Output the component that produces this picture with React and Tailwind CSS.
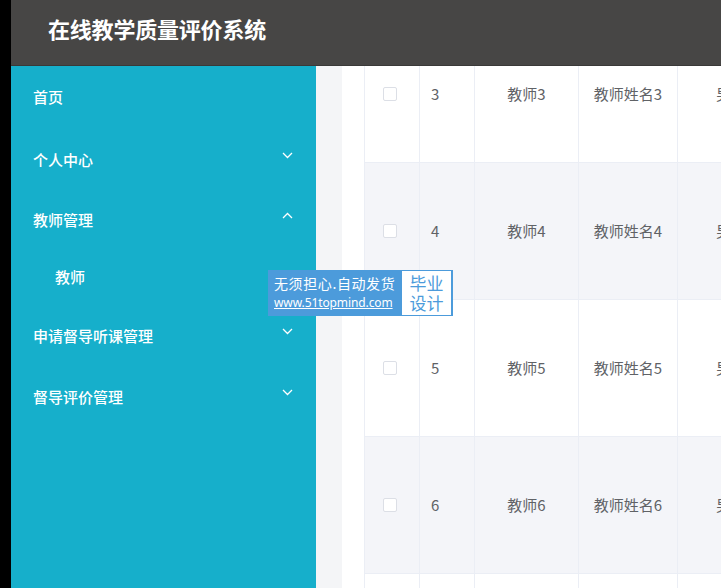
import React from "react";

const menus = [
  { label: "首页", h: "h-[60px]" },
  { label: "个人中心", arrow: "down", h: "h-[63px] pt-[3px]" },
  { label: "教师管理", arrow: "up", h: "h-[60px]" },
  { label: "教师", sub: true, h: "h-[54px]" },
  { label: "申请督导听课管理", arrow: "down", h: "h-[64px]" },
  { label: "督导评价管理", arrow: "down", h: "h-[58px]" },
];

const rows = [3, 4, 5, 6, 7];

function Chevron({ up }) {
  return (
    <svg width="11" height="7" viewBox="0 0 11 7" className="mb-[10px]">
      <path
        d={up ? "M1 6 L5.5 1.5 L10 6" : "M1 1 L5.5 5.5 L10 1"}
        fill="none"
        stroke="white"
        strokeWidth="1.3"
      />
    </svg>
  );
}

export default function App() {
  return (
    <div
      className="relative flex h-[588px] w-[721px] overflow-hidden bg-black"
      style={{ fontFamily: '"Microsoft YaHei", "Noto Sans CJK SC", sans-serif' }}
    >
      <div className="w-[11px] shrink-0 bg-black" />
      <div className="flex min-w-0 flex-1 flex-col">
        {/* header */}
        <div className="z-10 flex h-[66px] shrink-0 items-center border-b border-[#3a3938] bg-[#474645] pb-[9px] pl-[37px]">
          <h1 className="text-[22px] font-bold tracking-[-0.2px] text-white">在线教学质量评价系统</h1>
        </div>
        <div className="flex min-h-0 flex-1">
          {/* sidebar */}
          <div className="w-[305px] shrink-0 bg-[#16afcb] pt-[1px]">
            {menus.map((m) => (
              <div
                key={m.label}
                className={`flex items-center justify-between pr-[23px] text-[15px] font-medium text-white ${
                  m.sub ? "pl-[44px]" : "pl-[22px]"
                } ${m.h}`}
              >
                <span>{m.label}</span>
                {m.arrow && <Chevron up={m.arrow === "up"} />}
              </div>
            ))}
          </div>
          {/* main */}
          <div className="flex min-w-0 flex-1 bg-[#f4f5f7] pl-[26px]">
            <div className="min-w-0 flex-1 overflow-hidden bg-white pl-[22px]">
              <table className="-mt-[41px] w-[500px] table-fixed border-collapse text-[15px] text-[#606266]">
                <colgroup>
                  <col className="w-[55px]" />
                  <col className="w-[55px]" />
                  <col className="w-[104px]" />
                  <col className="w-[99px]" />
                  <col className="w-[187px]" />
                </colgroup>
                <tbody>
                  {rows.map((n, i) => (
                    <tr
                      key={n}
                      className={`h-[137px] ${i % 2 === 1 ? "bg-[#f4f5f9]" : "bg-white"}`}
                    >
                      <td className="border border-[#ebeef5] pl-[18px]">
                        <span className="block h-[14px] w-[14px] rounded-[2px] border border-[#dcdfe6] bg-white" />
                      </td>
                      <td className="border border-[#ebeef5] pl-[11px]">{n}</td>
                      <td className="border border-[#ebeef5] text-center">教师{n}</td>
                      <td className="border border-[#ebeef5] text-center">教师姓名{n}</td>
                      <td className="border border-[#ebeef5] pl-[38px] whitespace-nowrap">男</td>
                    </tr>
                  ))}
                </tbody>
              </table>
            </div>
          </div>
        </div>
      </div>

      {/* watermark */}
      <div className="absolute left-[268px] top-[270px] flex h-[46px] w-[185px] items-center bg-[#4c9bdb] pl-[6px] pr-[2px]">
        <div className="flex flex-1 flex-col leading-[20px] text-white">
          <span className="text-[14px] tracking-[0.6px]">无须担心.自动发货</span>
          <span
            className="text-[12px] tracking-[-0.1px] underline"
            style={{ fontFamily: '"Noto Sans", sans-serif' }}
          >
            www.51topmind.com
          </span>
        </div>
        <div className="flex h-[44px] w-[49px] flex-col items-center justify-center bg-white text-[17px] leading-[20px] text-[#4c9bdb]">
          <span>毕业</span>
          <span>设计</span>
        </div>
      </div>
    </div>
  );
}
